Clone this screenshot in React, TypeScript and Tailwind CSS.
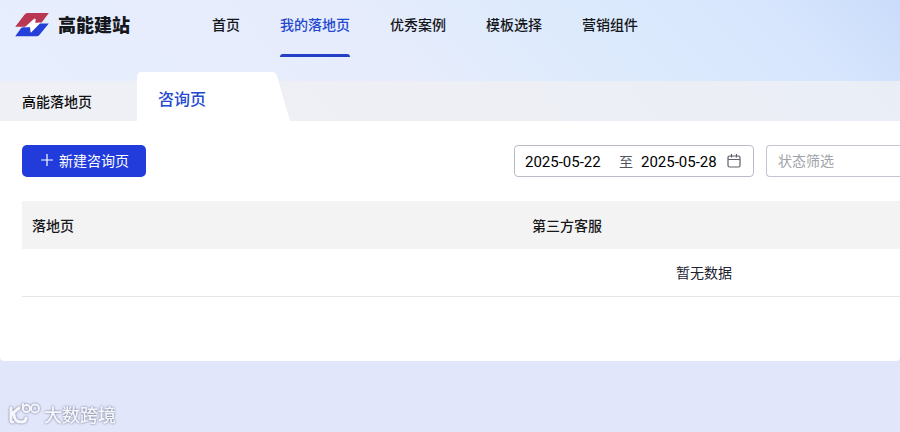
import clsx from 'clsx';

interface NavItem {
  label: string;
  active?: boolean;
}

const navItems: NavItem[] = [
  { label: '首页' },
  { label: '我的落地页', active: true },
  { label: '优秀案例' },
  { label: '模板选择' },
  { label: '营销组件' },
];

const columns = ['落地页', '第三方客服'];

function Logo() {
  return (
    <a href="#" className="flex items-center gap-2">
      <svg viewBox="0 0 108 76" className="h-[25px] w-9" aria-hidden="true">
        <path d="M40 3h65L86 29q-3 4-8 4H64l2-13-30 25H3L31 8q4-5 9-5Z" fill="#b93752" />
        <path d="M3 74l17-24q3-4 8-4h20l3 16 27-27h27L77 69q-4 5-9 5Z" fill="#2440d8" />
        <path d="M62 19 32 46l17-2 1 19 29-31-16 2Z" fill="#fff" />
      </svg>
      <span className="text-lg leading-6 font-black text-[#15171c]">高能建站</span>
    </a>
  );
}

function Header() {
  return (
    <header className="flex h-[81px] items-start pl-3.5">
      <div className="flex h-12 w-[198px] shrink-0 items-center">
        <Logo />
      </div>
      <nav className="flex gap-10">
        {navItems.map((item) => (
          <a
            key={item.label}
            href="#"
            className={clsx(
              'flex h-[57px] flex-col justify-between text-sm font-medium whitespace-nowrap',
              item.active ? 'text-[#2449cf]' : 'text-[#14161a]',
            )}
          >
            <span className="leading-12">{item.label}</span>
            {item.active && <span className="h-[3px] rounded-t-sm bg-[#243fc4]" />}
          </a>
        ))}
      </nav>
    </header>
  );
}

function Tabs() {
  return (
    <div className="flex h-10 items-end bg-[#f0f0f3]/75">
      <button type="button" className="h-10 w-[137px] shrink-0 pl-[22px] text-left text-sm font-medium text-[#111]">
        高能落地页
      </button>
      <button
        type="button"
        className="relative h-[49px] w-[153px] shrink-0 pt-0.5 pl-[21px] text-left text-base font-medium text-[#2449cf]"
      >
        <svg viewBox="0 0 153 49" className="absolute inset-0 h-full w-full" aria-hidden="true">
          <path d="M0 49V5q0-5 5-5h130q4 0 5 4l13 45Z" fill="#fff" />
        </svg>
        <span className="relative">咨询页</span>
      </button>
    </div>
  );
}

function PlusIcon() {
  return (
    <svg viewBox="0 0 12 12" className="h-3 w-3" stroke="currentColor" aria-hidden="true">
      <path d="M6 0v12M0 6h12" strokeWidth="1.2" />
    </svg>
  );
}

function CalendarIcon() {
  return (
    <svg viewBox="0 0 14 14" className="h-3.5 w-3.5" fill="none" stroke="#5c6068" aria-hidden="true">
      <rect x="1" y="2" width="12" height="11" rx="1.5" strokeWidth="1.2" />
      <path d="M1 5.5h12M4.5 0v3.5M9.5 0v3.5" strokeWidth="1.2" />
    </svg>
  );
}

function Toolbar() {
  const dateInput =
    "w-20 bg-transparent pt-0.5 font-['Roboto',sans-serif] text-[15px] leading-5 text-black outline-none";

  return (
    <div className="flex items-center">
      <button
        type="button"
        className="flex h-8 w-[124px] shrink-0 items-center justify-center gap-1.5 rounded-[5px] bg-[#223cdb] pb-0.5 pl-0.5 text-sm text-white"
      >
        <PlusIcon />
        新建咨询页
      </button>

      <div className="ml-auto flex gap-3">
        <div className="flex h-8 w-60 items-center rounded border border-[#b9bcc6] bg-white pr-3 pl-2.5 text-sm text-[#50545c]">
          <input aria-label="开始日期" defaultValue="2025-05-22" className={dateInput} />
          <span className="mr-2 ml-auto">至</span>
          <input aria-label="结束日期" defaultValue="2025-05-28" className={dateInput} />
          <span className="ml-1.5">
            <CalendarIcon />
          </span>
        </div>
        <select
          aria-label="状态筛选"
          className="h-8 w-[134px] appearance-none rounded-l border border-r-0 border-[#c3c6ce] bg-white pb-0.5 pl-[11px] text-sm text-[#a0a3a9]"
        >
          <option>状态筛选</option>
        </select>
      </div>
    </div>
  );
}

function DataTable() {
  return (
    <div className="mt-6 overflow-hidden">
      {/* wider than the window, the rest is cut off on the right */}
      <table className="w-full min-w-[1364px] table-fixed text-sm">
        <thead>
          <tr className="h-12 bg-[#f3f3f3] text-left text-[#17181b]">
            <th className="w-[500px] px-2.5 font-medium">{columns[0]}</th>
            <th className="px-2.5 font-medium">{columns[1]}</th>
          </tr>
        </thead>
        <tbody>
          <tr className="h-[47px] border-b border-[#e6e6e8]">
            <td colSpan={columns.length} className="text-center text-[#22232f]">
              暂无数据
            </td>
          </tr>
        </tbody>
      </table>
    </div>
  );
}

function Watermark() {
  return (
    <div className="flex items-center gap-1 text-[#f6f7fd] drop-shadow-[0_0_1px_#6d7188]">
      <svg viewBox="0 0 32 24" className="h-6 w-8" fill="none" stroke="currentColor" strokeLinecap="round" aria-hidden="true">
        <path d="M3 6v12q0 2 2 2M4 12l7-6M6 12q0 8 7 8 5 0 5-4" strokeWidth="3" />
        <path d="M15 2v5" strokeWidth="2" />
        <circle cx="18.5" cy="6.5" r="3.5" strokeWidth="2" />
        <circle cx="27" cy="6.5" r="4" strokeWidth="2" />
        <path d="M22 6.5h1" strokeWidth="2" />
      </svg>
      <span className="text-lg leading-6 font-medium">大数跨境</span>
    </div>
  );
}

export default function App() {
  return (
    <div className="flex min-h-screen flex-col overflow-hidden bg-[#e1e6fb] font-['Noto_Sans_CJK_SC',sans-serif]">
      <div className="bg-[linear-gradient(45deg,#e7eefd_0%,#e6ecfc_45%,#e0ebfc_57%,#dbeafc_68%,#d7e6fd_86%,#cadcfb_100%)]">
        <Header />
        <Tabs />
      </div>
      <main className="rounded-b bg-white pt-6 pb-16 pl-[22px]">
        <Toolbar />
        <DataTable />
      </main>
      <footer className="mt-auto px-2 pb-1.5">
        <Watermark />
      </footer>
    </div>
  );
}
